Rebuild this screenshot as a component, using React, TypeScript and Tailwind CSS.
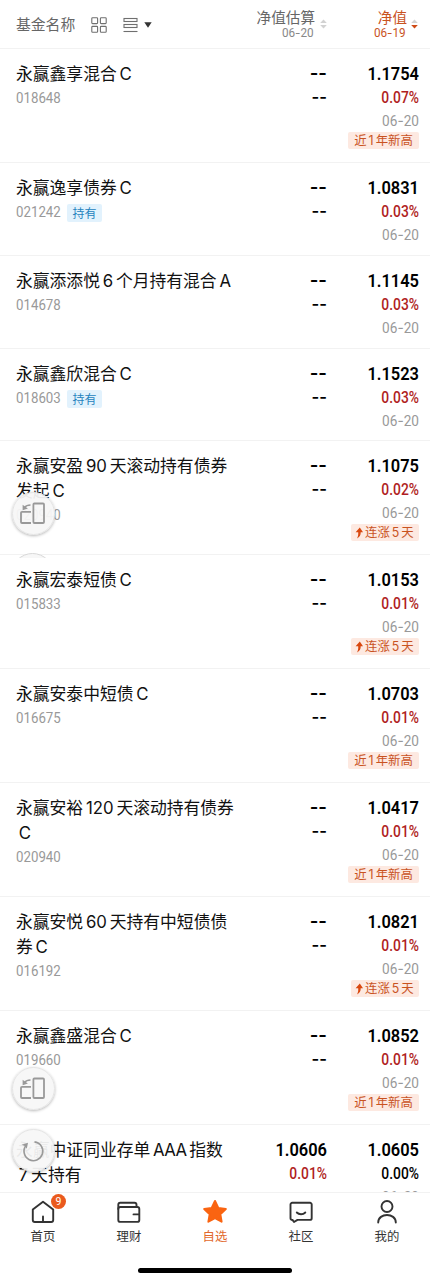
import React from "react";

type Tag = "high" | "rise";
type Fund = {
  name: string[][];
  code: string;
  held?: boolean;
  estimate?: [string, string];
  value: string;
  pct: string;
  tag?: Tag;
  height: string;
};

const TALL = "h-[114px]";
const MID = "h-[93px]";

const funds: Fund[] = [
  { name: [["永赢鑫享混合", "C"]], code: "018648", value: "1.1754", pct: "0.07%", tag: "high", height: TALL },
  { name: [["永赢逸享债券", "C"]], code: "021242", held: true, value: "1.0831", pct: "0.03%", height: MID },
  { name: [["永赢添添悦", "6", "个月持有混合", "A"]], code: "014678", value: "1.1145", pct: "0.03%", height: MID },
  { name: [["永赢鑫欣混合", "C"]], code: "018603", held: true, value: "1.1523", pct: "0.03%", height: "h-[92px]" },
  { name: [["永赢安盈", "90", "天滚动持有债券"], ["发起", "C"]], code: "020940", value: "1.1075", pct: "0.02%", tag: "rise", height: TALL },
  { name: [["永赢宏泰短债", "C"]], code: "015833", value: "1.0153", pct: "0.01%", tag: "rise", height: TALL },
  { name: [["永赢安泰中短债", "C"]], code: "016675", value: "1.0703", pct: "0.01%", tag: "high", height: TALL },
  { name: [["永赢安裕", "120", "天滚动持有债券"], ["C"]], code: "020940", value: "1.0417", pct: "0.01%", tag: "high", height: TALL },
  { name: [["永赢安悦", "60", "天持有中短债债"], ["券", "C"]], code: "016192", value: "1.0821", pct: "0.01%", tag: "rise", height: TALL },
  { name: [["永赢鑫盛混合", "C"]], code: "019660", value: "1.0852", pct: "0.01%", tag: "high", height: TALL },
  { name: [["永赢中证同业存单", "AAA", "指数"], ["7", "天持有"]], code: "", estimate: ["1.0606", "0.01%"], value: "1.0605", pct: "0.00%", height: TALL },
];

function DateText({ text }: { text: string }) {
  const [month, day] = text.split("-");
  return (
    <>
      {month}
      <span className="font-['Inter']">-</span>
      {day}
    </>
  );
}

function Name({ lines }: { lines: string[][] }) {
  return (
    <div className="text-[16.8px] leading-[24.4px] text-[#111]">
      {lines.map((line, i) => (
        <div key={i} className="whitespace-nowrap">
          {line.map((part, j) =>
            /^[A-Z0-9]+$/.test(part) ? (
              <span key={j} className={`mx-[2.8px] font-['Inter'] ${part === "AAA" ? "tracking-[-0.6px]" : ""}`}>{part}</span>
            ) : (
              <span key={j}>{part}</span>
            )
          )}
        </div>
      ))}
    </div>
  );
}

function Figures({ value, pct, flat }: { value: string; pct: string; flat?: boolean }) {
  return (
    <>
      <div className="origin-right scale-x-[0.865] font-['Roboto'] text-[19px] leading-[25px] font-semibold text-black">{value}</div>
      <div className={`origin-right scale-x-[0.835] font-['Roboto'] text-[16.6px] leading-[24px] font-medium ${flat ? "text-black" : "text-[#b01e23]"}`}>{pct}</div>
    </>
  );
}

function RiseArrow() {
  return (
    <svg className="mr-[2px] h-3 w-2" viewBox="0 0 8 12" fill="none">
      <path d="M4.8 0.6 8 5.2H5.7C5.8 8 4.6 10.2 2 11.4 3.1 9.5 3.4 7.6 3.2 5.2H0.6Z" fill="#d9480f" />
    </svg>
  );
}

function TagLabel({ tag }: { tag: Tag }) {
  return (
    <div className="flex justify-end">
      <div className={`flex h-[17px] items-center rounded-[2px] bg-[#fde9e1] text-[12.4px] leading-[17px] text-[#c9531f] ${tag === "high" ? "w-[71px] justify-center" : "w-[68px] pl-1"}`}>
        {tag === "rise" ? (
          <>
            <RiseArrow />
            连涨<span className="mx-[2px] font-['Inter']">5</span>天
          </>
        ) : (
          <>
            近<span className="mx-[2px] font-['Inter']">1</span>年新高
          </>
        )}
      </div>
    </div>
  );
}

function Row({ fund }: { fund: Fund }) {
  return (
    <div className={`flex shrink-0 border-b border-[#f2f2f2] pt-3 pr-[11px] pl-4 ${fund.height}`}>
      <div className="w-[240px]">
        <Name lines={fund.name} />
        {fund.code && (
          <div className="flex h-[25px] items-center">
            <span className="w-[51px] origin-left scale-x-[0.91] font-['Roboto'] text-[14.6px] text-[#999]">{fund.code}</span>
            {fund.held && (
              <span className="flex h-[18px] w-[35px] items-center justify-center rounded-[2px] bg-[#e2f2fd] text-[12px] text-[#2583bd]">持有</span>
            )}
          </div>
        )}
      </div>
      <div className="w-[71px] text-right">
        {fund.estimate ? (
          <Figures value={fund.estimate[0]} pct={fund.estimate[1]} />
        ) : (
          <div className="font-['Inter'] font-semibold text-black">
            <div className="text-[18.6px] leading-[24px]">--</div>
            <div className="text-[16.6px] leading-[24px]">--</div>
          </div>
        )}
      </div>
      <div className="w-[92px] text-right">
        <Figures value={fund.value} pct={fund.pct} flat={fund.pct === "0.00%"} />
        <div className="origin-right scale-x-[0.92] font-['Roboto'] text-[14.8px] leading-[22px] text-[#999]">
          <DateText text="06-20" />
        </div>
        {fund.tag && <TagLabel tag={fund.tag} />}
      </div>
    </div>
  );
}

function Sorter({ active }: { active?: boolean }) {
  return (
    <svg className="h-[10px] w-[7px]" viewBox="0 0 7 10">
      <path d="M3.5 0.5 6.8 4H0.2Z" fill="#d2d2d2" />
      <path d="M3.5 9.5 6.8 6H0.2Z" fill={active ? "#cf4a16" : "#d2d2d2"} />
    </svg>
  );
}

function Header() {
  return (
    <div className="flex h-[49px] shrink-0 border-b border-[#f2f2f2] pl-4">
      <div className="flex w-[200px] items-center pt-px text-[14.8px] text-[#666]">
        <span className="w-[75px]">基金名称</span>
        <svg className="h-4 w-4" viewBox="0 0 16 16" fill="none" stroke="#6f6f6f" strokeWidth="1.1">
          <rect x="0.8" y="0.8" width="5.8" height="5.8" rx="0.8" />
          <rect x="9.4" y="0.8" width="5.8" height="5.8" rx="0.8" />
          <rect x="0.8" y="9.4" width="5.8" height="5.8" rx="0.8" />
          <rect x="9.4" y="9.4" width="5.8" height="5.8" rx="0.8" />
        </svg>
        <svg className="ml-4 h-4 w-[15px]" viewBox="0 0 15 16" fill="none" stroke="#6f6f6f" strokeWidth="1.1">
          <rect x="1" y="1.5" width="13" height="3" />
          <rect x="1" y="7.5" width="13" height="3" />
          <path d="M0.5 14.5H14.5" />
        </svg>
        <svg className="ml-[6px] h-[6px] w-2" viewBox="0 0 8 6">
          <path d="M0.3 0.3H7.7L4 5.8Z" fill="#333" />
        </svg>
      </div>
      <div className="w-[99px] pt-[8px] text-right text-[#666]">
        <div className="text-[14.6px] leading-[18px]">净值估算</div>
        <div className="origin-right scale-x-[0.93] pr-[1.5px] font-['Roboto'] text-[12.6px] leading-[14px] text-[#888]">
          <DateText text="06-20" />
        </div>
      </div>
      <div className="flex w-[14px] items-center justify-center pl-[3px]">
        <Sorter />
      </div>
      <div className="w-[78px] pt-[8px] text-right text-[#c9531f]">
        <div className="text-[14.6px] leading-[18px]">净值</div>
        <div className="origin-right scale-x-[0.93] pr-[1.5px] font-['Roboto'] text-[12.6px] leading-[14px]">
          <DateText text="06-19" />
        </div>
      </div>
      <div className="flex w-[14px] items-center justify-center pl-px">
        <Sorter active />
      </div>
    </div>
  );
}

const BUTTON = "absolute left-[11.5px] flex h-[43px] w-[43px] items-center justify-center rounded-full border border-[#e4e4e4] bg-[#f7f7f7]/94 shadow-[0_1px_3px_rgba(0,0,0,0.28)]";

function RotateButton({ top }: { top: string }) {
  return (
    <div className={`${BUTTON} ${top}`}>
      <svg className="h-6 w-7" viewBox="0 0 28 24" fill="none" stroke="#999" strokeWidth="1.8">
        <rect x="14.4" y="1.5" width="10.6" height="19.5" rx="1" />
        <path d="M12 9.8H3A1 1 0 0 0 2 10.8V20A1 1 0 0 0 3 21H12" />
        <path d="M11.5 3C9 3 7 3.6 5.6 5.4" strokeWidth="1.4" />
        <path d="M3.600 2.800V8.300L8.900 6.400Z" fill="#999" stroke="none" />
      </svg>
    </div>
  );
}

function RefreshButton({ top }: { top: string }) {
  return (
    <div className={`${BUTTON} ${top}`}>
      <svg className="h-6 w-6" viewBox="0 0 24 24" fill="none" stroke="#999" strokeWidth="1.6">
        <path d="M5.200 6.200A9.400 9.400 0 1 0 13.500 2.900" />
        <path d="M0.500 5.800 7 3.800 5.800 9.800 3.900 7Z" fill="#999" stroke="none" />
      </svg>
    </div>
  );
}

const iconProps = { className: "h-7 w-7", viewBox: "0 0 28 28", fill: "none", stroke: "#333", strokeWidth: 1.9, strokeLinejoin: "round" as const, strokeLinecap: "round" as const };

function NavItem({ label, active, children }: { label: string; active?: boolean; children: React.ReactNode }) {
  return (
    <div className="flex flex-1 flex-col items-center pt-[5px]">
      {children}
      <span className={`mt-[2px] text-[12.4px] leading-4 ${active ? "text-[#e2692c]" : "text-[#333]"}`}>{label}</span>
    </div>
  );
}

function BottomNav() {
  return (
    <div className="flex h-[88px] shrink-0 flex-col border-t border-[#f2f2f2] bg-white">
      <div className="flex h-[75px]">
        <NavItem label="首页">
          <div className="relative h-7 w-7">
            <svg {...iconProps}>
              <path d="M3.800 11.500 14 3.700 24.200 11.500V22A2 2 0 0 1 22.200 24H5.800A2 2 0 0 1 3.800 22Z" />
              <path d="M14 18.500V23.500" />
            </svg>
            <div className="absolute top-[-4px] left-[22px] flex h-[15px] w-[15px] items-center justify-center rounded-full bg-[#ea5a1d] font-['Roboto'] text-[10.5px] text-white">9</div>
          </div>
        </NavItem>
        <NavItem label="理财">
          <svg {...iconProps}>
            <rect x="3.300" y="9" width="21" height="14.900" rx="2" />
            <path d="M3.300 11V6.800A2 2 0 0 1 5.300 4.800H19.500A2 2 0 0 1 21.500 6.800V8.700M24 16.400H18.500" />
          </svg>
        </NavItem>
        <NavItem label="自选" active>
          <svg className="h-7 w-7" viewBox="0 0 28 28">
            <path d="m14 3 3.300 6.900 7.500 1.100-5.500 5.200 1.300 7.500L14 20.200l-6.600 3.500 1.300-7.500L3.200 11l7.500-1.100Z" fill="#fa6411" stroke="#fa6411" strokeWidth="2" strokeLinejoin="round" />
          </svg>
        </NavItem>
        <NavItem label="社区">
          <svg {...iconProps}>
            <path d="M5.200 4.800H23A1.700 1.700 0 0 1 24.700 6.500V20.200A1.700 1.700 0 0 1 23 21.900H10.500L7 24 5.500 21.900A1.700 1.700 0 0 1 3.500 20.200V6.500A1.700 1.700 0 0 1 5.200 4.800Z" />
            <path d="M9.800 14.500C12 16.900 16 16.900 18.300 14.500" />
          </svg>
        </NavItem>
        <NavItem label="我的">
          <svg {...iconProps}>
            <circle cx="14" cy="8.500" r="5.500" />
            <path d="M5.200 24.500C5.200 14.500 22.800 14.500 22.800 24.500" />
          </svg>
        </NavItem>
      </div>
      <div className="mx-auto h-[5px] w-[154px] rounded-full bg-black" />
    </div>
  );
}

export default function App() {
  return (
    <div className="relative flex h-[1280px] w-[430px] flex-col overflow-hidden bg-white font-['Noto_Sans_CJK_SC',sans-serif]">
      <Header />
      <div className="flex min-h-0 flex-1 flex-col overflow-hidden">
        {funds.map((fund, i) => (
          <Row key={i} fund={fund} />
        ))}
      </div>
      <BottomNav />
      <RotateButton top="top-[492px]" />
      <div className="absolute top-[553px] left-[11px] h-[5px] w-[44px] overflow-hidden">
        <div className="h-[43px] w-[43px] rounded-full border border-[#d8d8d8] bg-[#f7f7f7]" />
      </div>
      <RotateButton top="top-[1067px]" />
      <RefreshButton top="top-[1129px]" />
    </div>
  );
}
